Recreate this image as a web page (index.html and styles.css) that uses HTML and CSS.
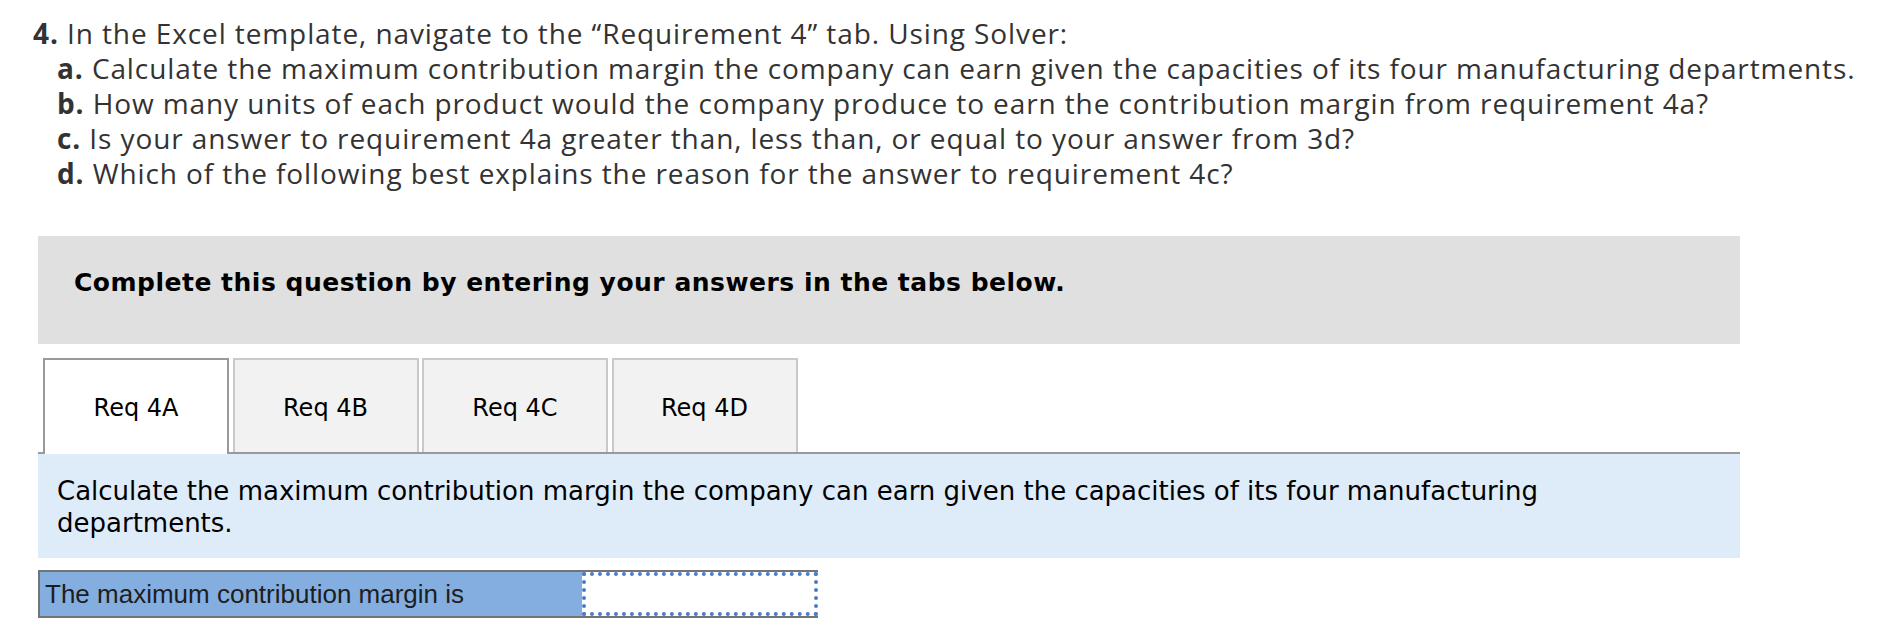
FILE: index.html
```html
<!DOCTYPE html>
<html lang="en">
<head>
<meta charset="utf-8">
<title>Requirement 4</title>
<link rel="stylesheet" href="styles.css">
</head>
<body>
<div class="page">
  <div class="question">
    <p class="q-line"><b>4.</b> In the Excel template, navigate to the “Requirement 4” tab. Using Solver:</p>
    <p class="q-line q-sub"><b>a.</b> Calculate the maximum contribution margin the company can earn given the capacities of its four manufacturing departments.</p>
    <p class="q-line q-sub"><b>b.</b> How many units of each product would the company produce to earn the contribution margin from requirement 4a?</p>
    <p class="q-line q-sub"><b>c.</b> Is your answer to requirement 4a greater than, less than, or equal to your answer from 3d?</p>
    <p class="q-line q-sub"><b>d.</b> Which of the following best explains the reason for the answer to requirement 4c?</p>
  </div>

  <div class="instructions">Complete this question by entering your answers in the tabs below.</div>

  <div class="tabs">
    <div class="tab active">Req 4A</div>
    <div class="tab">Req 4B</div>
    <div class="tab">Req 4C</div>
    <div class="tab">Req 4D</div>
  </div>

  <div class="tab-panel">
    <p class="panel-text">Calculate the maximum contribution margin the company can earn given the capacities of its four manufacturing departments.</p>
  </div>

  <div class="answer-row">
    <div class="answer-label">The maximum contribution margin is</div>
    <div class="answer-input"></div>
  </div>
</div>
</body>
</html>
```

FILE: styles.css
```css
* {
  box-sizing: border-box;
}

html, body {
  margin: 0;
  padding: 0;
  background: #ffffff;
}

.page {
  padding: 16px 0 0 0;
}

.question {
  padding-left: 33px;
  font-family: "Open Sans", "Liberation Sans", sans-serif;
  font-size: 28px;
  letter-spacing: 0.9px;
  line-height: 35px;
  color: #333333;
}

.q-line {
  margin: 0;
  white-space: nowrap;
}

.q-line b {
  font-weight: 700;
}

.q-sub {
  padding-left: 24px;
}

.instructions {
  margin: 45px 0 0 38px;
  width: 1702px;
  height: 108px;
  background: #e0e0e0;
  padding: 34px 0 0 36px;
  font-family: Verdana, "DejaVu Sans", sans-serif;
  font-weight: 700;
  font-size: 25px;
  letter-spacing: 0.5px;
  line-height: 26px;
  color: #000000;
}

.tabs {
  display: flex;
  align-items: flex-start;
  gap: 3.5px;
  margin: 14px 0 0 38px;
  width: 1702px;
  padding-left: 5px;
  border-bottom: 2px solid #999999;
}

.tab {
  width: 186px;
  height: 94px;
  display: flex;
  align-items: center;
  justify-content: center;
  padding-top: 4px;
  background: #f2f2f2;
  border: 2px solid #c9c9c9;
  border-bottom: none;
  font-family: Verdana, "DejaVu Sans", sans-serif;
  font-size: 24px;
  color: #000000;
}

.tab.active {
  height: 96px;
  margin-bottom: -2px;
  padding-bottom: 2px;
  background: #ffffff;
  border-color: #999999;
}

.tab-panel {
  margin-left: 38px;
  width: 1702px;
  height: 104px;
  background: #deebf8;
  padding: 21px 19px 19px 19px;
}

.panel-text {
  margin: 0;
  max-width: 1620px;
  font-family: Verdana, "DejaVu Sans", sans-serif;
  font-size: 26px;
  line-height: 32px;
  color: #000000;
}

.answer-row {
  display: flex;
  margin: 12px 0 0 38px;
  width: 780px;
  border-top: 2px solid #747474;
  border-bottom: 2px solid #747474;
  border-left: 2px solid #747474;
}

.answer-label {
  width: 542px;
  height: 44px;
  background: #84aee0;
  padding: 0 5px;
  font-family: Arial, "Liberation Sans", sans-serif;
  font-size: 26px;
  line-height: 44px;
  white-space: nowrap;
  color: #1e1e1e;
}

.answer-input {
  width: 236px;
  height: 44px;
  background: #ffffff;
  border: 4px dotted #4d7ec4;
}
```
